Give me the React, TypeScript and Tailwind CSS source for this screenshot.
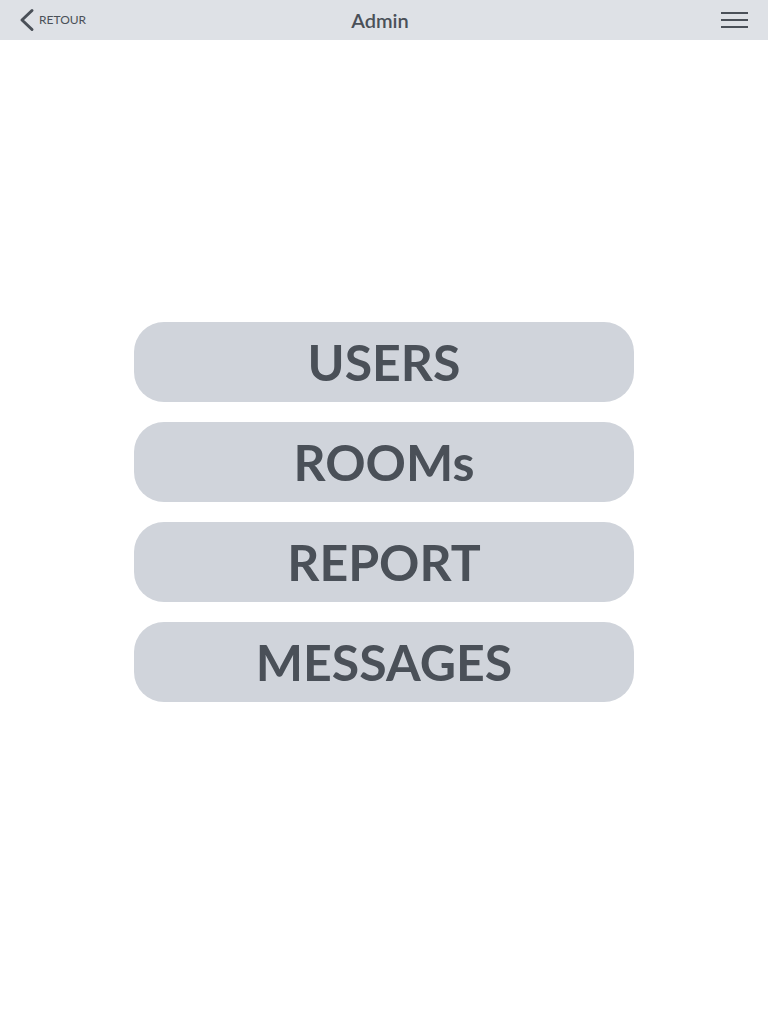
const ITEMS = ["USERS", "ROOMs", "REPORT", "MESSAGES"];

export default function App() {
  return (
    <div className="flex min-h-screen flex-col bg-white font-['Lato',sans-serif] text-[#4a5058]">
      <header className="flex h-10 items-center bg-[#dee1e6]">
        <div className="flex w-[100px] items-center pl-[17px]">
          <button type="button" className="flex items-center">
            <svg width="18" height="26" viewBox="0 0 18 26">
              <path
                d="M15 3.5 L5 13 L15 22.5"
                fill="none"
                stroke="#4a5058"
                strokeWidth="3"
                strokeLinecap="round"
                strokeLinejoin="round"
              />
            </svg>
            <span className="ml-1 text-[12px] leading-none">RETOUR</span>
          </button>
        </div>
        <h1 className="flex-1 text-center text-[20px] font-semibold leading-none">Admin</h1>
        <div className="flex w-[108px] justify-end pr-5">
          <button type="button" className="flex flex-col gap-[5px]">
            <span className="block h-[2px] w-[27px] bg-[#4a5058]" />
            <span className="block h-[2px] w-[27px] bg-[#4a5058]" />
            <span className="block h-[2px] w-[27px] bg-[#4a5058]" />
          </button>
        </div>
      </header>

      <main className="flex flex-1 flex-col items-center justify-center gap-5 pb-10">
        {ITEMS.map((label) => (
          <button
            key={label}
            type="button"
            className="flex h-20 w-[500px] items-center justify-center rounded-[30px] bg-[#d0d4db] text-[50px] font-bold leading-none"
          >
            {label}
          </button>
        ))}
      </main>
    </div>
  );
}
